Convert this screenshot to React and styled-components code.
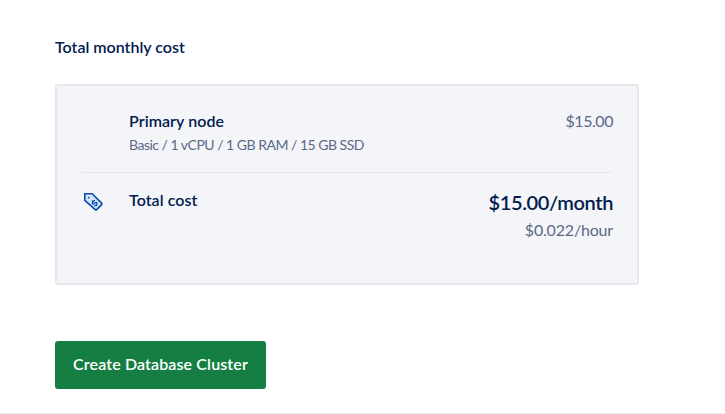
import React from "react";
import styled, { createGlobalStyle } from "styled-components";

const GlobalStyle = createGlobalStyle`
  * { box-sizing: border-box; }
  body { margin: 0; background: #fff; font-family: Lato, "Open Sans", sans-serif; color: #031b4e; }
`;

const Page = styled.main`
  height: 414px;
  padding: 35px 0 0 55px;
  border-bottom: 1px solid #ededef;
  overflow: hidden;
`;

const Line = styled.div`
  width: max-content;
  margin: 0 0 0 ${(p) => (p.$end ? "auto" : "0")};
  font-size: ${(p) => p.$size || 16}px;
  line-height: ${(p) => p.$height || 24}px;
  font-weight: ${(p) => (p.$bold ? 600 : 400)};
  letter-spacing: ${(p) => p.$track || 0}px;
  color: ${(p) => (p.$muted ? "#5b6987" : "#031b4e")};
  white-space: nowrap;
`;

const Card = styled.section`
  width: 584px;
  height: 201px;
  margin-top: 25px;
  padding: 23px 24px 0;
  background: #f3f5f9;
  border: 2px solid #e5e8ed;
  border-radius: 3px;
`;

const Row = styled.div`
  display: grid;
  grid-template-columns: 48px 1fr auto;
  align-items: start;
`;

const NodeRow = styled(Row)`
  height: 64px;
  border-bottom: 1px solid #e5e8ed;
`;

const TotalRow = styled(Row)`
  padding-top: 15px;
`;

const Totals = styled.div`
  display: grid;
  gap: 2px;
`;

const TagIcon = styled.svg`
  display: block;
  margin: 4px 0 0 2px;
`;

const Button = styled.button`
  display: block;
  width: 211px;
  height: 48px;
  margin-top: 56px;
  padding: 0 0 2px;
  border: 0;
  border-radius: 3px;
  background: #157f43;
  color: #fff;
  font: 600 16px/24px Lato, sans-serif;
  letter-spacing: 0.13px;
`;

function PriceTag() {
  return (
    <TagIcon width="22" height="22" viewBox="0 0 22 22" fill="none" stroke="#0a4aab" aria-hidden="true">
      <path d="M1.8 1.8h7.4l9.4 9.3q.7.8 0 1.5l-4.9 5q-.7.7-1.4 0L1.8 8.3Z" fill="#d3e5fb" strokeWidth="1.6" />
      <circle cx="5.8" cy="5.6" r="0.9" fill="#0a4aab" stroke="none" />
      <g transform="translate(11.6 11.2) rotate(-45)" strokeWidth="1.3">
        <path d="M2.1-1.5C1.3-2.7-1.9-2.5-1.9-1S2-.6 2 1-1.3 2.7-2.1 1.5" />
        <path d="M0-3.6v1.5M0 2.1v1.5" />
      </g>
    </TagIcon>
  );
}

export default function App() {
  return (
    <>
      <GlobalStyle />
      <Page>
        <Line as="h2" $bold>Total monthly cost</Line>
        <Card>
          <NodeRow>
            <span />
            <div>
              <Line $bold $track={0.06}>Primary node</Line>
              <Line $size={14} $track={-0.5} $muted>Basic / 1 vCPU / 1 GB RAM / 15 GB SSD</Line>
            </div>
            <Line $track={-0.45} $muted>$15.00</Line>
          </NodeRow>
          <TotalRow>
            <PriceTag />
            <Line $bold $track={0.05}>Total cost</Line>
            <Totals>
              <Line $bold $size={20} $height={28} $track={-0.37} $end>$15.00/month</Line>
              <Line $track={-0.18} $muted $end>$0.022/hour</Line>
            </Totals>
          </TotalRow>
        </Card>
        <Button>Create Database Cluster</Button>
      </Page>
    </>
  );
}
